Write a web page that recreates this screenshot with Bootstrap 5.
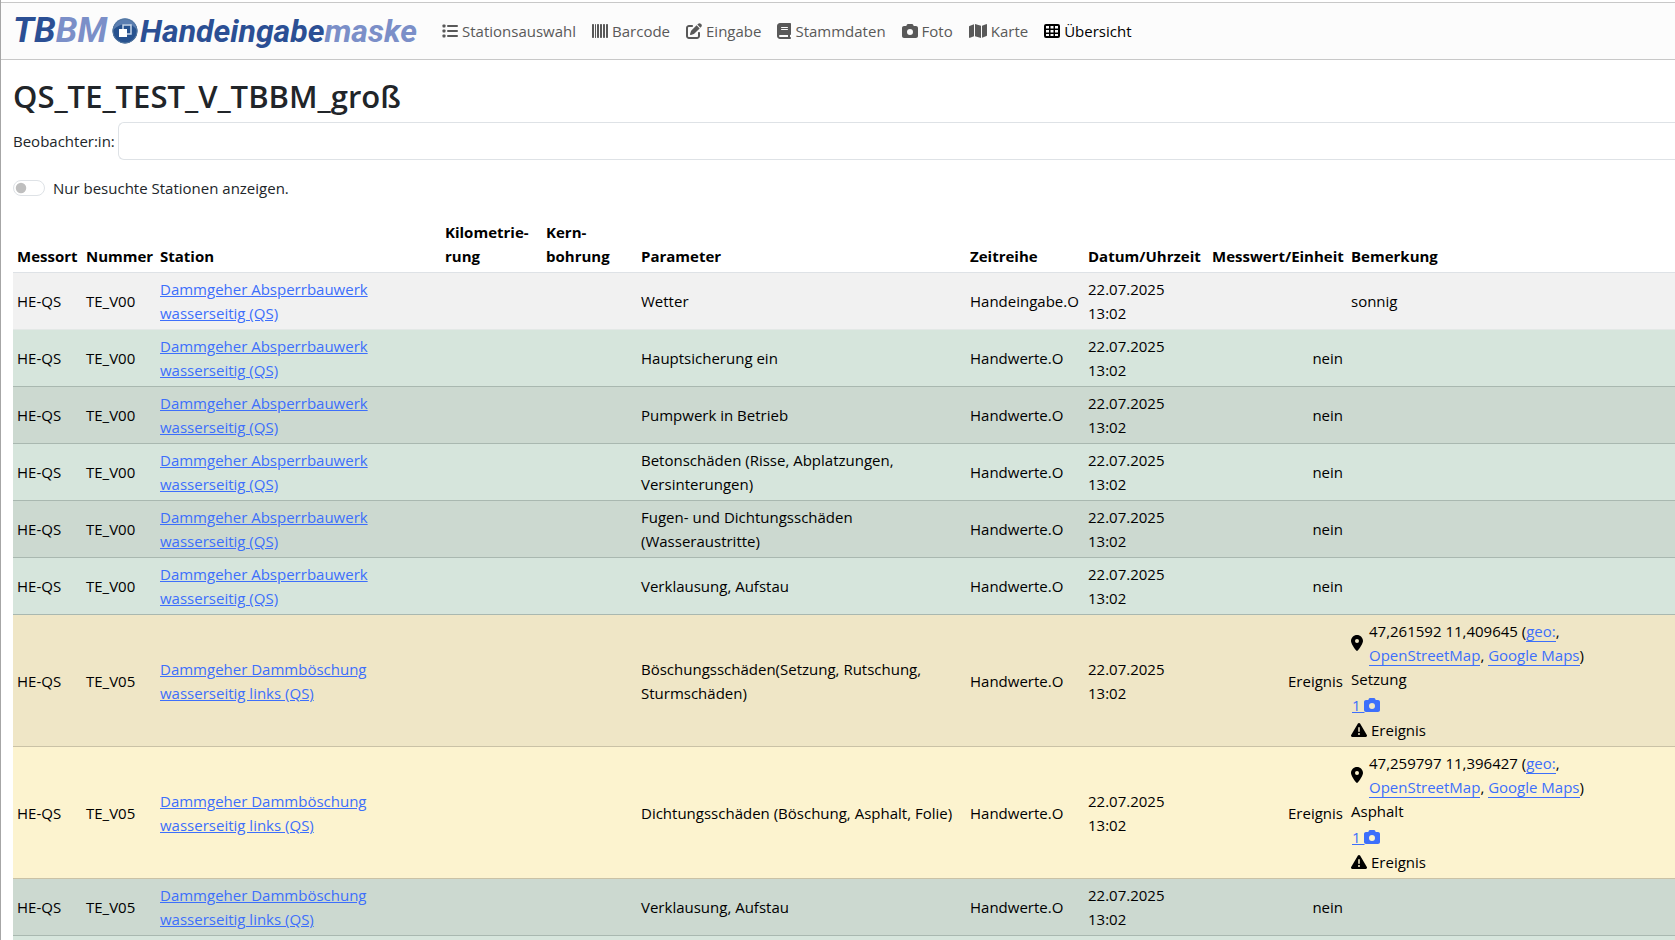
<!DOCTYPE html>
<html lang="de">
<head>
<meta charset="utf-8">
<meta name="viewport" content="width=device-width, initial-scale=1">
<title>TBBM Handeingabemaske – Übersicht</title>
<link href="https://cdn.jsdelivr.net/npm/bootstrap@5.3.0/dist/css/bootstrap.min.css" rel="stylesheet">
<style>
  html { overflow: hidden; }
  body { font-family: "Open Sans", "Noto Sans", sans-serif; font-size: 15px; line-height: 24px; color: #212529; }
  a { color: #3d6ffb; }
  .page-frame { border-left: 1px solid #a6a6a6; padding-top: 2px; min-height: 100vh; overflow: hidden; }
  .top-bar.navbar { background: #fcfcfc; border-top: 1px solid #c8c8c8; border-bottom: 1px solid #c8c8c8; height: 58px; padding: 0 12px; }
  .logo-text { font: italic bold 32px/36px Roboto, "Liberation Sans", sans-serif; color: #2b4f94; width: 413px; }
  .logo-text:hover { color: #2b4f94; }
  .logo-text .short { font-size: 35px; }
  .logo-text .pale { color: #7b8fc8; }
  .logo-text svg { flex: none; margin: 0 2px 0 5px; }
  .top-bar .navbar-nav .nav-link { color: #595959; padding: 0; gap: 4px; }
  .top-bar .navbar-nav .nav-link.active { color: #000; }
  .top-bar .navbar-nav { gap: 16px; }
  .ico { height: 16px; fill: currentColor; flex: none; }
  h1 { font-size: 31px; line-height: 40px; font-weight: 600; margin: 16px 0 6px; }
  .content-area { padding-left: 12px; }
  .content-area .form-control { border-color: #dee2e6; height: 38px; }
  .observer-row { gap: 3px; }
  .form-switch .form-check-input { width: 32px; height: 16px; border-color: #dee2e6; margin-top: 4px; }
  .form-switch { padding-left: 40px; min-height: 24px; }
  .form-switch .form-check-input { margin-left: -40px; }
  .values { table-layout: fixed; color: #000; }
  .values > :not(caption) > * > * { color: #000; box-shadow: none; background: var(--row); border-bottom: 1px solid var(--line); }
  .values thead { --row: #fff; --line: #dee2e6; vertical-align: bottom; }
  .r-plain { --row: #f1f1f1; --line: #e3e8e6; }
  .r-ok { --row: #d6e5dc; --line: #a9b8b0; }
  .r-ok-alt { --row: #ccd9d0; --line: #a9b8b0; }
  .r-warn { --row: #fcf3cf; --line: #cac2a6; }
  .r-warn-alt { --row: #efe6c6; --line: #cac2a6; }
  .c1 { width: 69px } .c2 { width: 74px } .c3 { width: 285px } .c4 { width: 101px } .c5 { width: 95px }
  .c6 { width: 329px } .c7 { width: 118px } .c8 { width: 124px } .c9 { width: 139px }
  .values td:nth-child(3) { padding-right: 64px; }
  .values td:nth-child(7) { white-space: nowrap; }
  .values td:nth-child(8) { padding-right: 36px; }
  .values td:nth-child(9), .values th:nth-child(9) { text-align: right; }
  .geo { gap: 6px; }
  .geo a { text-decoration: none; border-bottom: 1px solid; }
  .photo-line { height: 26px; padding: 2px 0 0 1px; }
  .event-line { height: 25px; gap: 4px; }
</style>
</head>
<body>
<svg class="d-none">
  <symbol id="i-list" viewBox="0 0 512 512"><rect x="16" y="48" width="96" height="96" rx="26"/><rect x="16" y="208" width="96" height="96" rx="26"/><rect x="16" y="368" width="96" height="96" rx="26"/><rect x="160" y="64" width="352" height="64" rx="32"/><rect x="160" y="224" width="352" height="64" rx="32"/><rect x="160" y="384" width="352" height="64" rx="32"/></symbol>
  <symbol id="i-barcode" viewBox="0 0 512 512"><path d="M24 32h16a24 24 0 0 1 24 24v400a24 24 0 0 1-24 24H24a24 24 0 0 1-24-24V56a24 24 0 0 1 24-24zm88 0a16 16 0 0 1 16 16v416a16 16 0 0 1-32 0V48a16 16 0 0 1 16-16zm72 0h16a24 24 0 0 1 24 24v400a24 24 0 0 1-24 24h-16a24 24 0 0 1-24-24V56a24 24 0 0 1 24-24zm96 0h16a24 24 0 0 1 24 24v400a24 24 0 0 1-24 24h-16a24 24 0 0 1-24-24V56a24 24 0 0 1 24-24zm96 0h16a24 24 0 0 1 24 24v400a24 24 0 0 1-24 24h-16a24 24 0 0 1-24-24V56a24 24 0 0 1 24-24zm96 0h16a24 24 0 0 1 24 24v400a24 24 0 0 1-24 24h-16a24 24 0 0 1-24-24V56a24 24 0 0 1 24-24z"/></symbol>
  <symbol id="i-edit" viewBox="0 0 512 512"><path d="M471.6 21.7c-21.9-21.9-57.3-21.9-79.2 0L362.3 51.7l97.9 97.9 30.1-30.1c21.9-21.9 21.9-57.3 0-79.2zM172.4 241.7c-6.1 6.1-10.8 13.6-13.5 21.9l-29.6 88.8c-2.9 8.6-.6 18.1 5.8 24.6s15.9 8.7 24.6 5.8l88.8-29.6c8.2-2.7 15.7-7.4 21.9-13.5L437.7 172.3 339.7 74.3zM96 64C43 64 0 107 0 160v256c0 53 43 96 96 96h256c53 0 96-43 96-96v-96c0-17.7-14.300-32-32-32s-32 14.300-32 32v96c0 17.700-14.300 32-32 32H96c-17.700 0-32-14.300-32-32V160c0-17.700 14.300-32 32-32h96c17.700 0 32-14.300 32-32s-14.300-32-32-32z"/></symbol>
  <symbol id="i-book" viewBox="0 0 448 512"><path d="M96 0C43 0 0 43 0 96v320c0 53 43 96 96 96h320c17.700 0 32-14.300 32-32s-14.300-32-32-32v-64c17.700 0 32-14.300 32-32V32c0-17.700-14.300-32-32-32zm0 384h256v64H96a32 32 0 0 1 0-64zm32-240a16 16 0 0 1 16-16h192a16 16 0 0 1 0 32H144a16 16 0 0 1-16-16zm16 48h192a16 16 0 0 1 0 32H144a16 16 0 0 1 0-32z"/></symbol>
  <symbol id="i-camera" viewBox="0 0 512 512"><path d="M149.100 64.800 138.700 96H64c-35.300 0-64 28.700-64 64v256c0 35.300 28.700 64 64 64h384c35.300 0 64-28.700 64-64V160c0-35.300-28.700-64-64-64h-74.700l-10.400-31.200C356.400 45.200 338.100 32 317.400 32H194.600c-20.700 0-39 13.200-45.500 32.800zM256 192a96 96 0 1 1 0 192 96 96 0 0 1 0-192z"/></symbol>
  <symbol id="i-map" viewBox="0 0 576 512"><path d="M384 476.100 192 421.200V35.900l192 54.900zm32-1.200V88.400l127.100-50.900c15.800-6.300 32.900 5.300 32.900 22.300v334.800c0 9.800-6 18.600-15.100 22.300zM15.100 95.100 160 37.200v386.500L32.900 474.500C17.100 480.800 0 469.200 0 452.200V117.400c0-9.800 6-18.600 15.100-22.300z"/></symbol>
  <symbol id="i-table" viewBox="0 0 512 512"><path fill-rule="evenodd" d="M64 32h384a64 64 0 0 1 64 64v320a64 64 0 0 1-64 64H64a64 64 0 0 1-64-64V96a64 64 0 0 1 64-64zm0 64v80h96V96zm144 0v80h96V96zm144 0v80h96V96zM64 224v80h96v-80zm144 0v80h96v-80zm144 0v80h96v-80zM64 352v64h96v-64zm144 0v64h96v-64zm144 0v64h96v-64z"/></symbol>
  <symbol id="i-pin" viewBox="0 0 384 512"><path d="M215.700 499.200C267 435 384 279.400 384 192 384 86 298 0 192 0S0 86 0 192c0 87.400 117 243 168.300 307.200 12.300 15.300 35.100 15.300 47.400 0zM192 128a64 64 0 1 1 0 128 64 64 0 0 1 0-128z"/></symbol>
  <symbol id="i-warn" viewBox="0 0 512 512"><path d="M256 32c14.200 0 27.300 7.500 34.500 19.800l216 368c7.300 12.400 7.300 27.700.2 40.100S486.300 480 472 480H40c-14.300 0-27.600-7.700-34.700-20.100s-7-27.800.2-40.100l216-368C228.700 39.500 241.800 32 256 32zm0 128c-13.300 0-24 10.700-24 24v112a24 24 0 0 0 48 0V184c0-13.300-10.700-24-24-24zm32 224a32 32 0 1 0-64 0 32 32 0 0 0 64 0z"/></symbol>
</svg>
<div class="page-frame">
  <nav class="top-bar navbar navbar-expand flex-nowrap justify-content-start">
    <a class="navbar-brand logo-text d-flex align-items-center text-decoration-none p-0 m-0 me-3" href="#">
      <span class="short">TB<span class="pale">BM</span></span>
      <svg width="26" height="26" viewBox="0 0 26 26">
        <circle cx="13" cy="13" r="12.500" fill="#27528f"/>
        <path d="M1 12A12 12 0 0 1 25 12Q20 5 13 6T1 12z" fill="#7f9cc8" opacity=".6"/>
        <circle cx="13" cy="13" r="12" fill="none" stroke="#53779f"/>
        <path d="M11 11V7h8v9h-4" fill="none" stroke="#c9d8ea" stroke-width="1.500"/>
        <path d="M7 11h8v8H7z" fill="#fff"/>
      </svg>
      <span>Handeingabe<span class="pale">maske</span></span>
    </a>
    <div class="navbar-nav">
      <a class="nav-link d-flex align-items-center" href="#"><svg class="ico" width="16"><use href="#i-list"/></svg>Stationsauswahl</a>
      <a class="nav-link d-flex align-items-center" href="#"><svg class="ico" width="16"><use href="#i-barcode"/></svg>Barcode</a>
      <a class="nav-link d-flex align-items-center" href="#"><svg class="ico" width="16"><use href="#i-edit"/></svg>Eingabe</a>
      <a class="nav-link d-flex align-items-center" href="#"><svg class="ico" width="14"><use href="#i-book"/></svg>Stammdaten</a>
      <a class="nav-link d-flex align-items-center" href="#"><svg class="ico" width="16"><use href="#i-camera"/></svg>Foto</a>
      <a class="nav-link d-flex align-items-center" href="#"><svg class="ico" width="18"><use href="#i-map"/></svg>Karte</a>
      <a class="nav-link d-flex align-items-center active" aria-current="page" href="#"><svg class="ico" width="16"><use href="#i-table"/></svg>Übersicht</a>
    </div>
  </nav>
  <main class="content-area">
    <h1>QS_TE_TEST_V_TBBM_groß</h1>
    <div class="observer-row d-flex align-items-center mb-3">
      <label for="observer">Beobachter:in:</label>
      <input id="observer" type="text" class="form-control flex-fill w-auto border-end-0 rounded-end-0">
    </div>
    <div class="form-check form-switch mb-3">
      <input class="form-check-input" type="checkbox" role="switch" id="visited">
      <label class="form-check-label" for="visited">Nur besuchte Stationen anzeigen.</label>
    </div>
    <table class="table table-sm align-middle values mb-0">
      <colgroup><col class="c1"><col class="c2"><col class="c3"><col class="c4"><col class="c5"><col class="c6"><col class="c7"><col class="c8"><col class="c9"><col></colgroup>
      <thead class="align-bottom">
        <tr><th>Messort</th><th>Nummer</th><th>Station</th><th>Kilometrie-<br>rung</th><th>Kern-<br>bohrung</th><th>Parameter</th><th>Zeitreihe</th><th>Datum/Uhrzeit</th><th>Messwert/Einheit</th><th>Bemerkung</th></tr>
      </thead>
      <tbody>
        <tr class="r-plain"><td>HE-QS</td><td>TE_V00</td><td><a href="#">Dammgeher Absperrbauwerk wasserseitig (QS)</a></td><td></td><td></td><td>Wetter</td><td>Handeingabe.O</td><td>22.07.2025 13:02</td><td></td><td>sonnig</td></tr>
        <tr class="r-ok"><td>HE-QS</td><td>TE_V00</td><td><a href="#">Dammgeher Absperrbauwerk wasserseitig (QS)</a></td><td></td><td></td><td>Hauptsicherung ein</td><td>Handwerte.O</td><td>22.07.2025 13:02</td><td>nein</td><td></td></tr>
        <tr class="r-ok-alt"><td>HE-QS</td><td>TE_V00</td><td><a href="#">Dammgeher Absperrbauwerk wasserseitig (QS)</a></td><td></td><td></td><td>Pumpwerk in Betrieb</td><td>Handwerte.O</td><td>22.07.2025 13:02</td><td>nein</td><td></td></tr>
        <tr class="r-ok"><td>HE-QS</td><td>TE_V00</td><td><a href="#">Dammgeher Absperrbauwerk wasserseitig (QS)</a></td><td></td><td></td><td>Betonschäden (Risse, Abplatzungen, Versinterungen)</td><td>Handwerte.O</td><td>22.07.2025 13:02</td><td>nein</td><td></td></tr>
        <tr class="r-ok-alt"><td>HE-QS</td><td>TE_V00</td><td><a href="#">Dammgeher Absperrbauwerk wasserseitig (QS)</a></td><td></td><td></td><td>Fugen- und Dichtungsschäden (Wasseraustritte)</td><td>Handwerte.O</td><td>22.07.2025 13:02</td><td>nein</td><td></td></tr>
        <tr class="r-ok"><td>HE-QS</td><td>TE_V00</td><td><a href="#">Dammgeher Absperrbauwerk wasserseitig (QS)</a></td><td></td><td></td><td>Verklausung, Aufstau</td><td>Handwerte.O</td><td>22.07.2025 13:02</td><td>nein</td><td></td></tr>
        <tr class="r-warn-alt"><td>HE-QS</td><td>TE_V05</td><td><a href="#">Dammgeher Dammböschung wasserseitig links (QS)</a></td><td></td><td></td><td>Böschungsschäden(Setzung, Rutschung, Sturmschäden)</td><td>Handwerte.O</td><td>22.07.2025 13:02</td><td>Ereignis</td>
          <td>
            <div class="geo d-flex align-items-center"><svg class="ico" width="12"><use href="#i-pin"/></svg><div>47,261592 11,409645 (<a href="#">geo:</a>,<br><a href="#">OpenStreetMap</a>, <a href="#">Google Maps</a>)</div></div>
            <div>Setzung</div>
            <div class="photo-line"><a class="d-inline-flex align-items-center" href="#"><span>1&nbsp;</span><svg class="ico" width="16"><use href="#i-camera"/></svg></a></div>
            <div class="event-line d-flex align-items-center"><svg class="ico" width="16"><use href="#i-warn"/></svg>Ereignis</div>
          </td></tr>
        <tr class="r-warn"><td>HE-QS</td><td>TE_V05</td><td><a href="#">Dammgeher Dammböschung wasserseitig links (QS)</a></td><td></td><td></td><td>Dichtungsschäden (Böschung, Asphalt, Folie)</td><td>Handwerte.O</td><td>22.07.2025 13:02</td><td>Ereignis</td>
          <td>
            <div class="geo d-flex align-items-center"><svg class="ico" width="12"><use href="#i-pin"/></svg><div>47,259797 11,396427 (<a href="#">geo:</a>,<br><a href="#">OpenStreetMap</a>, <a href="#">Google Maps</a>)</div></div>
            <div>Asphalt</div>
            <div class="photo-line"><a class="d-inline-flex align-items-center" href="#"><span>1&nbsp;</span><svg class="ico" width="16"><use href="#i-camera"/></svg></a></div>
            <div class="event-line d-flex align-items-center"><svg class="ico" width="16"><use href="#i-warn"/></svg>Ereignis</div>
          </td></tr>
        <tr class="r-ok-alt"><td>HE-QS</td><td>TE_V05</td><td><a href="#">Dammgeher Dammböschung wasserseitig links (QS)</a></td><td></td><td></td><td>Verklausung, Aufstau</td><td>Handwerte.O</td><td>22.07.2025 13:02</td><td>nein</td><td></td></tr>
        <tr class="r-ok"><td colspan="10">&nbsp;</td></tr>
      </tbody>
    </table>
  </main>
</div>
<script src="https://cdn.jsdelivr.net/npm/bootstrap@5.3.0/dist/js/bootstrap.bundle.min.js"></script>
</body>
</html>
